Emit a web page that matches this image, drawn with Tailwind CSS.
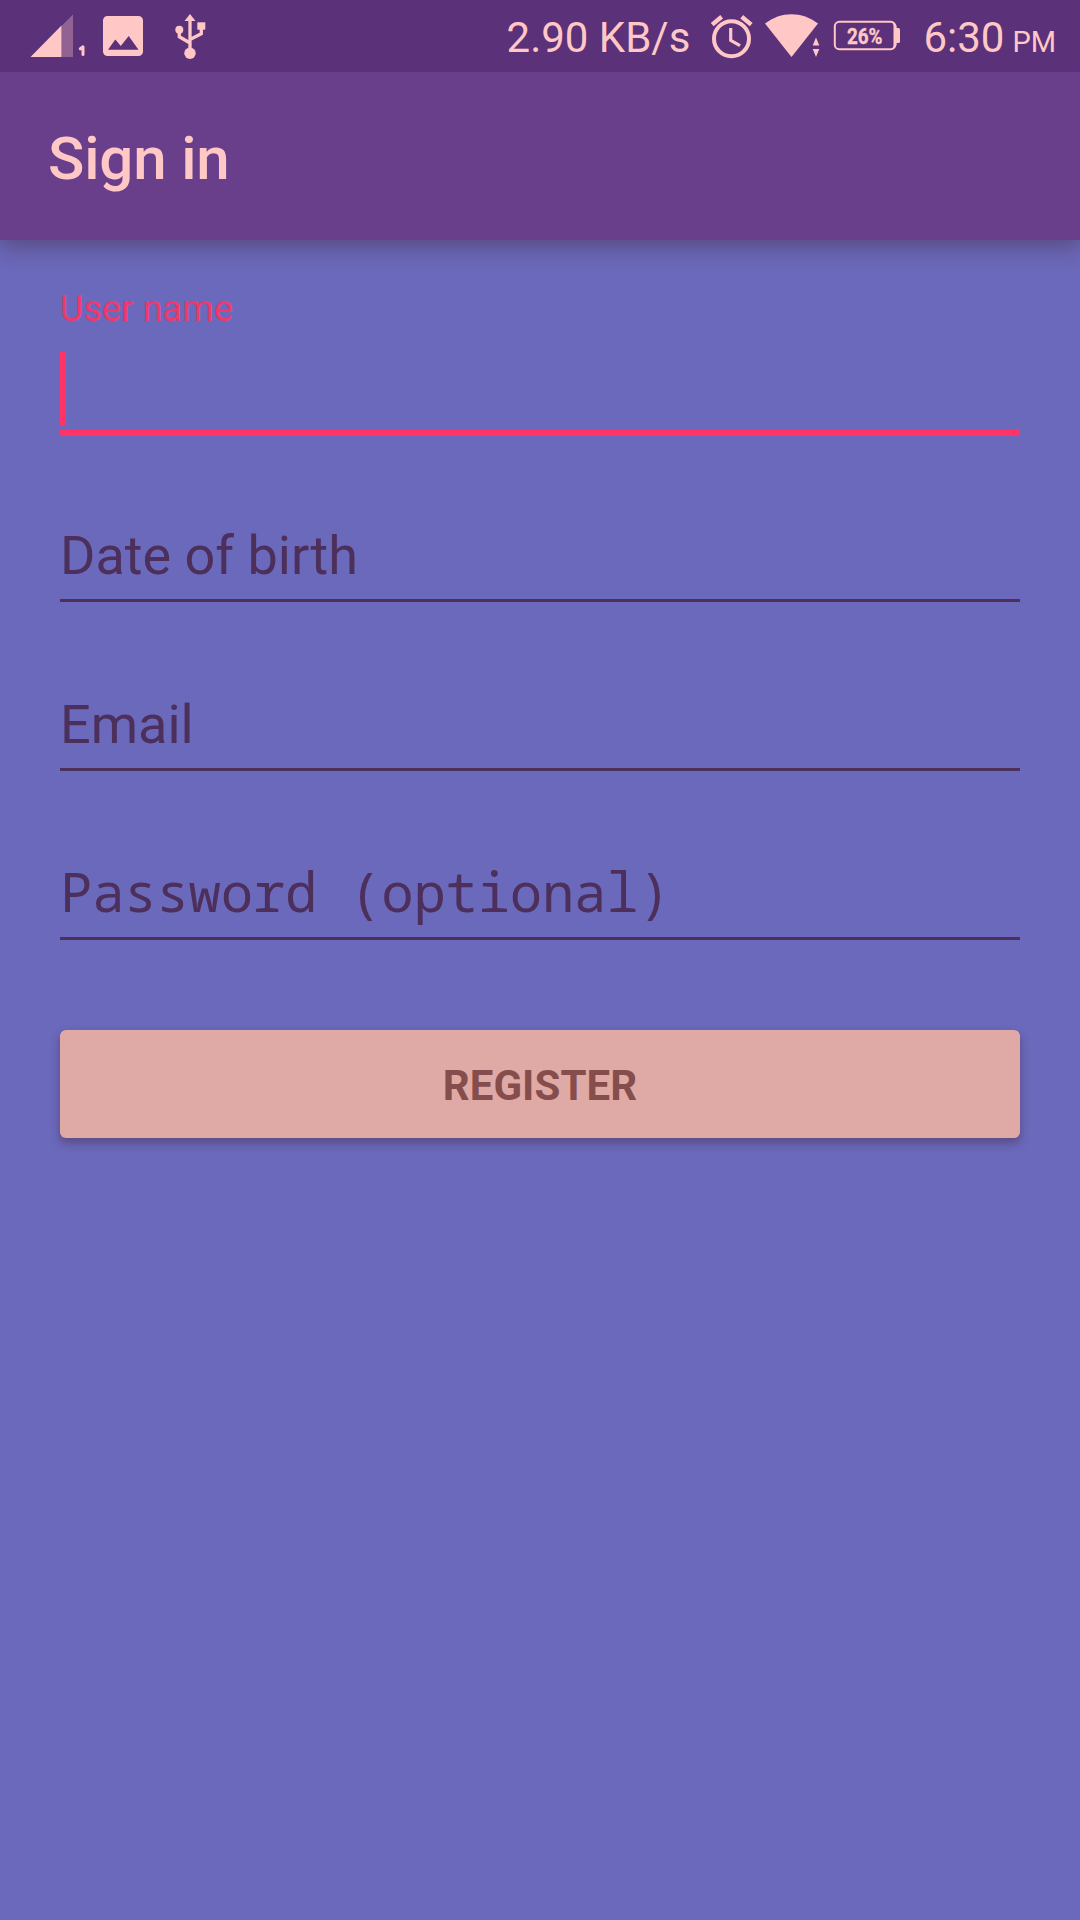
<!DOCTYPE html>
<html lang="en">
<head>
<meta charset="utf-8">
<title>Sign in</title>
<script src="https://cdn.jsdelivr.net/npm/@tailwindcss/browser@4"></script>
</head>
<body class="h-[1920px] w-[1080px] overflow-hidden bg-[#6b69bb] font-['Roboto',sans-serif]">
<header class="relative bg-[#693f8b] shadow-[0_8px_20px_rgba(60,30,40,0.38)]">
  <div class="flex h-[72px] items-start justify-between bg-[#5b3179] text-[#ffc7c5]">
    <!-- notification icons -->
    <svg class="h-[72px] w-[240px] shrink-0" viewBox="0 0 240 72" fill="currentColor">
      <path d="M73 14.500V57H61.500V26z" opacity=".33"/>
      <path d="M30.500 57 61.500 25.500V57z"/>
      <path d="M80.300 48.800 83 46.800V54.600" fill="none" stroke="currentColor" stroke-width="3" stroke-linecap="round" stroke-linejoin="round"/>
      <path fill-rule="evenodd" d="M107.500 16h31a4.500 4.500 0 0 1 4.500 4.500v31a4.500 4.500 0 0 1-4.500 4.500h-31a4.500 4.500 0 0 1-4.500-4.500v-31a4.500 4.500 0 0 1 4.500-4.500zM108 49.700h30.500L128.700 36l-7.900 10-5.500-6.600z"/>
      <path d="M190 14l5.500 7h-11z"/>
      <circle cx="190" cy="53.300" r="5.700"/>
      <circle cx="179.300" cy="29.700" r="4"/>
      <path d="M197.300 22.300h8v7.400h-8z"/>
      <path d="M190 19v34M179.300 30v6.700L190 43M201.300 28v5.700L190 39.500" fill="none" stroke="currentColor" stroke-width="3.300"/>
    </svg>
    <div class="flex h-[72px] items-start pr-6">
      <span class="mt-[13px] mr-[15px] text-[42px] leading-[50px] whitespace-nowrap">2.90 KB/s</span>
      <!-- alarm, wifi, battery -->
      <svg class="h-[72px] w-[200px] shrink-0" viewBox="705 0 200 72">
        <g fill="none" stroke="currentColor">
          <circle cx="731.500" cy="38.700" r="17.500" stroke-width="4"/>
          <path d="M730.700 28v12.300l9.300 5.400" stroke-width="3.200"/>
          <path d="M712.200 24.600 721.700 16.700M741.700 16.700 751.200 24.600" stroke-width="4.400"/>
          <rect x="834.800" y="21.800" width="60.500" height="27.400" rx="4.500" stroke-width="2"/>
        </g>
        <g fill="currentColor">
          <path d="M791.500 57 765 23.500C781 11 802 11 818 23.500z"/>
          <path d="M816 37.500l3.300 8h-6.600zM816 57l-3.300-8h6.600z"/>
          <path d="M896 28h2.500a1.500 1.500 0 0 1 1.500 1.500v12a1.500 1.500 0 0 1-1.500 1.500H896z"/>
          <path d="M892 21.500l4.500 4v20l-4.500 4 1.500-4v-20z"/>
          <text x="847" y="43.900" textLength="35.500" lengthAdjust="spacingAndGlyphs" stroke="currentColor" stroke-width=".4" class="text-[22.5px] font-bold">26%</text>
        </g>
      </svg>
      <span class="mt-[13px] ml-[18px] flex items-baseline leading-[50px] whitespace-nowrap"><span class="text-[42px]">6:30</span><span class="ml-2 text-[29px]">PM</span></span>
    </div>
  </div>
  <div class="flex h-[168px] items-start px-12 pt-[51px]">
    <h1 class="text-[60px] leading-[72px] font-medium tracking-[-0.15px] text-[#ffc7c5]">Sign in</h1>
  </div>
</header>
<main class="flex flex-col px-[60px]">
  <label class="flex h-[196px] flex-col border-b-[6px] border-[#ff3366] pt-12">
    <span class="text-[36px] leading-[42px] tracking-[0.1px] text-[#ef386c]">User name</span>
    <span class="mt-[21px] h-[74px] w-1.5 bg-[#ff3366]"></span>
  </label>
  <div class="flex h-[166px] flex-col justify-end border-b-[3px] border-[#4d2f5c] pb-[13px] text-[54px] leading-[60px] text-[#4d2f5c]">Date of birth</div>
  <div class="flex h-[169px] flex-col justify-end border-b-[3px] border-[#4d2f5c] pb-[13px] text-[54px] leading-[60px] text-[#4d2f5c]">Email</div>
  <div class="flex h-[169px] flex-col justify-end border-b-[3px] border-[#4d2f5c] pb-4 font-['Noto_Sans_Mono','DejaVu_Sans_Mono',monospace] text-[54px] leading-[60px] tracking-[-0.27px] whitespace-pre text-[#4d2f5c]">Password (optional)</div>
  <button class="mt-[90px] h-[108px] rounded-md bg-[#dfa9a6] pt-0.5 text-[42px] font-bold tracking-[0.1px] text-[#854d4b] shadow-[0_5px_10px_rgba(60,30,50,0.4)]">REGISTER</button>
</main>
</body>
</html>
